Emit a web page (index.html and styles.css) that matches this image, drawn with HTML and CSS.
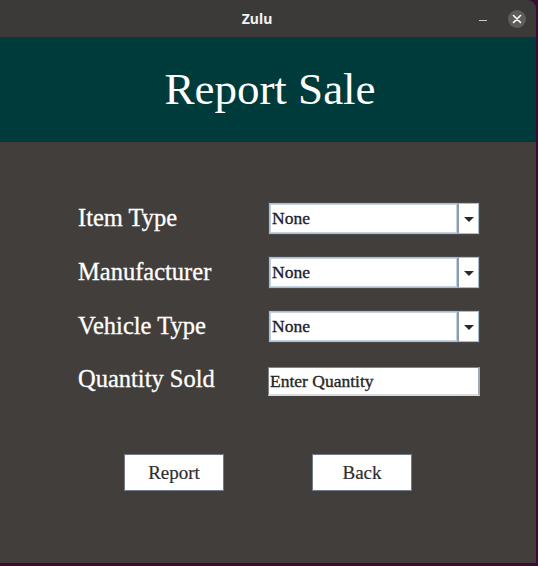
FILE: index.html
```html
<!DOCTYPE html>
<html>
<head>
<meta charset="utf-8">
<link rel="stylesheet" href="styles.css">
</head>
<body>
<div class="window">
  <div class="titlebar">
    <span class="title">Zulu</span>
    <span class="minimize"></span>
    <span class="close">
      <svg width="18" height="18" viewBox="0 0 18 18"><path d="M5.5 5.5 L12.5 12.5 M12.5 5.5 L5.5 12.5" stroke="#ffffff" stroke-width="1.6" stroke-linecap="round"/></svg>
    </span>
  </div>
  <div class="header"><h1>Report Sale</h1></div>
  <div class="content">
    <div class="form">
      <div class="label">Item Type</div>
      <div class="combo"><span class="combo-value">None</span><span class="combo-arrow"><span class="tri"></span></span></div>
      <div class="label">Manufacturer</div>
      <div class="combo"><span class="combo-value">None</span><span class="combo-arrow"><span class="tri"></span></span></div>
      <div class="label">Vehicle Type</div>
      <div class="combo"><span class="combo-value">None</span><span class="combo-arrow"><span class="tri"></span></span></div>
      <div class="label">Quantity Sold</div>
      <div class="entry">Enter Quantity</div>
    </div>
    <div class="buttons">
      <div class="btn">Report</div>
      <div class="btn">Back</div>
    </div>
  </div>
</div>
</body>
</html>
```

FILE: styles.css
```css
html, body {
  margin: 0;
  padding: 0;
  background: #3a0c31;
  width: 538px;
  height: 566px;
  overflow: hidden;
}
.window {
  width: 536px;
  height: 563px;
  background: #423e3b;
  border-top-right-radius: 9px;
  overflow: hidden;
  display: flex;
  flex-direction: column;
}
.titlebar {
  height: 37px;
  background: #3c3a38;
  display: flex;
  align-items: center;
}
.title {
  flex: 1;
  text-align: center;
  padding-left: 35px;
  color: #f2f2f2;
  font-family: "Noto Sans", "DejaVu Sans", sans-serif;
  font-weight: bold;
  font-size: 14px;
}
.minimize {
  width: 8px;
  height: 1px;
  background: #c8c8c8;
  margin-right: 21px;
  margin-top: 3px;
}
.close {
  width: 18px;
  height: 18px;
  border-radius: 50%;
  background: #5f5d5b;
  margin-right: 10px;
  display: flex;
}
.header {
  height: 105px;
  background: #003b3b;
  display: flex;
  align-items: center;
  justify-content: center;
}
.header h1 {
  margin: 0;
  font-family: "Liberation Serif", serif;
  font-weight: normal;
  font-size: 45px;
  color: #ffffff;
  padding-left: 4px;
  padding-bottom: 2px;
}
.content {
  padding: 60px 0 0 78px;
}
.form {
  display: grid;
  grid-template-columns: 190px 212px;
  row-gap: 21px;
  align-items: center;
}
.label {
  font-family: "Liberation Serif", serif;
  font-size: 24.5px;
  color: #ffffff;
  line-height: 33px;
  margin-top: -3px;
  -webkit-text-stroke: 0.3px #ffffff;
}
.combo {
  height: 33px;
  box-sizing: border-box;
  display: flex;
  background: #ffffff;
  border: 1px solid #4a4a4a;
}
.combo-value {
  flex: 1;
  border: 1px solid #a9bccf;
  border-right: 2px solid #8c9cab;
  font-family: "Liberation Serif", serif;
  font-size: 17.5px;
  color: #1a1d2b;
  -webkit-text-stroke: 0.35px #1a1d2b;
  display: flex;
  align-items: center;
  padding-left: 2px;
  box-shadow: inset 0 0 0 1px #c4d3e2;
}
.combo-arrow {
  width: 19px;
  display: flex;
  align-items: center;
  justify-content: center;
  border: 1px solid #a9bccf;
  border-left: none;
}
.tri {
  width: 0;
  height: 0;
  border-left: 5px solid transparent;
  border-right: 5px solid transparent;
  border-top: 5px solid #2a2a2a;
  margin-top: 1px;
}
.entry {
  height: 29px;
  box-sizing: border-box;
  background: #ffffff;
  border-top: 1px solid #7c848c;
  border-left: 1px solid #7c848c;
  border-right: 2px solid #a0a8b0;
  border-bottom: 2px solid #d8dce0;
  font-family: "Liberation Serif", serif;
  font-size: 17.5px;
  color: #262626;
  -webkit-text-stroke: 0.35px #262626;
  display: flex;
  align-items: center;
  padding-left: 1px;
  margin-top: 3px;
}
.buttons {
  display: flex;
  gap: 88px;
  padding-left: 46px;
  margin-top: 58px;
}
.btn {
  width: 100px;
  height: 37px;
  box-sizing: border-box;
  background: #ffffff;
  border: 1px solid #6f7b88;
  font-family: "Liberation Serif", serif;
  font-size: 19px;
  color: #2e2e2e;
  -webkit-text-stroke: 0.2px #2e2e2e;
  display: flex;
  align-items: center;
  justify-content: center;
}
```
